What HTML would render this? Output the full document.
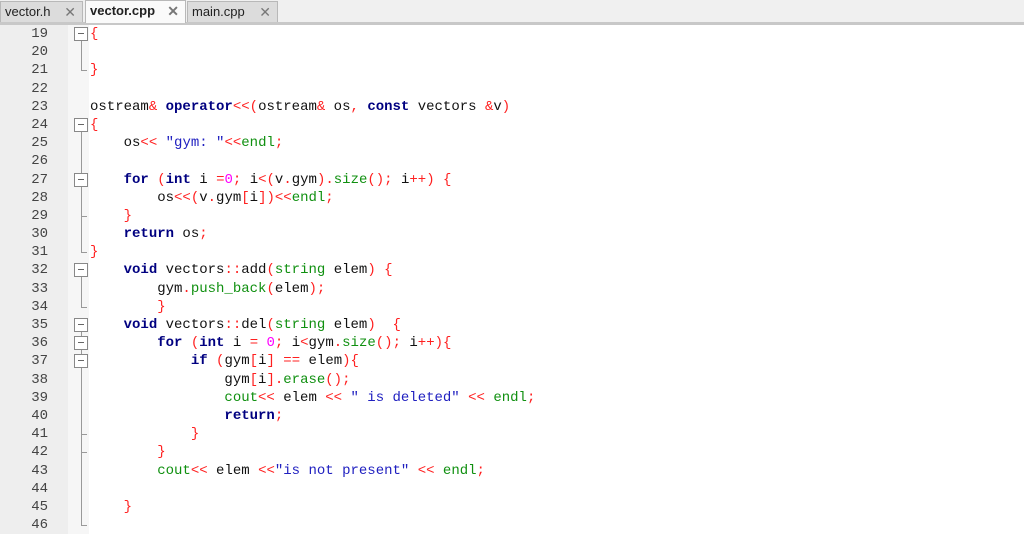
<!DOCTYPE html>
<html><head><meta charset="utf-8"><style>
body{margin:0;width:1024px;height:534px;overflow:hidden;background:#fff;position:relative;font-family:"Liberation Sans",sans-serif}
#tabs{position:absolute;left:0;top:0;width:1024px;height:22px;background:#f0f0f0;border-bottom:3px solid #c8c8c8}
.tab{position:absolute;top:1px;height:21px;background:#dcdcdc;border:1px solid #b8b8b8;border-bottom:none;font-size:13px;line-height:20px;padding-left:4px;box-sizing:border-box;color:#222}
.tab .x{position:absolute;right:6px;top:0;color:#777;font-size:14px}
.tab.act{background:#fafafa;font-weight:bold;top:0;height:23px}
#gut{position:absolute;left:0;top:25px;width:68px;height:509px;background:#eeeeee}
#fold{position:absolute;left:68px;top:25px;width:21px;height:509px;background:#f6f6f6}
#code{position:absolute;left:0;top:25px;width:1024px}
.l{height:18.2px;line-height:18.2px;position:relative;white-space:pre;font-family:"Liberation Mono",monospace;font-size:14px;color:#111}
.n{position:absolute;left:0;width:48px;text-align:right;color:#444}
.c{position:absolute;left:90px}
.k{color:#000080;font-weight:bold}.o{color:#ff2020}.g{color:#109010}.s{color:#2020c0}.m{color:#ff00ff}
.bx{position:absolute;left:74px;top:2px;width:14px;height:14px;border:1px solid #888;background:#fff;box-sizing:border-box;z-index:2}
.bx:after{content:"";position:absolute;left:3px;top:5px;width:6px;height:1px;background:#666}
.vl{position:absolute;left:81px;top:0;width:1px;height:18.2px;background:#999}
.vlb{position:absolute;left:81px;top:14px;width:1px;height:4.2px;background:#999}
.vlt{position:absolute;left:81px;top:0;width:1px;height:10px;background:#999}
.hz{position:absolute;left:81px;top:9px;width:6px;height:1px;background:#999}
</style></head><body>
<div id="tabs">
<div class="tab" style="left:0;width:83px">vector.h<span class="x">✕</span></div>
<div class="tab act" style="left:85px;width:101px">vector.cpp<span class="x">✕</span></div>
<div class="tab" style="left:187px;width:91px">main.cpp<span class="x">✕</span></div>
</div>
<div id="gut"></div><div id="fold"></div>
<div id="code">
<div class="l"><span class="n">19</span><span class="bx"></span><span class="vlb"></span><span class="c"><span class="o">{</span></span></div>
<div class="l"><span class="n">20</span><span class="vl"></span></div>
<div class="l"><span class="n">21</span><span class="vlt"></span><span class="hz"></span><span class="c"><span class="o">}</span></span></div>
<div class="l"><span class="n">22</span></div>
<div class="l"><span class="n">23</span><span class="c">ostream<span class="o">&amp;</span> <span class="k">operator</span><span class="o">&lt;&lt;(</span>ostream<span class="o">&amp;</span> os<span class="o">,</span> <span class="k">const</span> vectors <span class="o">&amp;</span>v<span class="o">)</span></span></div>
<div class="l"><span class="n">24</span><span class="bx"></span><span class="vlb"></span><span class="c"><span class="o">{</span></span></div>
<div class="l"><span class="n">25</span><span class="vl"></span><span class="c">    os<span class="o">&lt;&lt;</span> <span class="s">"gym: "</span><span class="o">&lt;&lt;</span><span class="g">endl</span><span class="o">;</span></span></div>
<div class="l"><span class="n">26</span><span class="vl"></span></div>
<div class="l"><span class="n">27</span><span class="vl"></span><span class="bx"></span><span class="c">    <span class="k">for</span> <span class="o">(</span><span class="k">int</span> i <span class="o">=</span><span class="m">0</span><span class="o">;</span> i<span class="o">&lt;(</span>v<span class="o">.</span>gym<span class="o">).</span><span class="g">size</span><span class="o">();</span> i<span class="o">++)</span> <span class="o">{</span></span></div>
<div class="l"><span class="n">28</span><span class="vl"></span><span class="c">        os<span class="o">&lt;&lt;(</span>v<span class="o">.</span>gym<span class="o">[</span>i<span class="o">])&lt;&lt;</span><span class="g">endl</span><span class="o">;</span></span></div>
<div class="l"><span class="n">29</span><span class="vl"></span><span class="hz"></span><span class="c">    <span class="o">}</span></span></div>
<div class="l"><span class="n">30</span><span class="vl"></span><span class="c">    <span class="k">return</span> os<span class="o">;</span></span></div>
<div class="l"><span class="n">31</span><span class="vlt"></span><span class="hz"></span><span class="c"><span class="o">}</span></span></div>
<div class="l"><span class="n">32</span><span class="bx"></span><span class="vlb"></span><span class="c">    <span class="k">void</span> vectors<span class="o">::</span>add<span class="o">(</span><span class="g">string</span> elem<span class="o">)</span> <span class="o">{</span></span></div>
<div class="l"><span class="n">33</span><span class="vl"></span><span class="c">        gym<span class="o">.</span><span class="g">push_back</span><span class="o">(</span>elem<span class="o">);</span></span></div>
<div class="l"><span class="n">34</span><span class="vlt"></span><span class="hz"></span><span class="c">        <span class="o">}</span></span></div>
<div class="l"><span class="n">35</span><span class="bx"></span><span class="vlb"></span><span class="c">    <span class="k">void</span> vectors<span class="o">::</span>del<span class="o">(</span><span class="g">string</span> elem<span class="o">)</span>  <span class="o">{</span></span></div>
<div class="l"><span class="n">36</span><span class="vl"></span><span class="bx"></span><span class="c">        <span class="k">for</span> <span class="o">(</span><span class="k">int</span> i <span class="o">=</span> <span class="m">0</span><span class="o">;</span> i<span class="o">&lt;</span>gym<span class="o">.</span><span class="g">size</span><span class="o">();</span> i<span class="o">++){</span></span></div>
<div class="l"><span class="n">37</span><span class="vl"></span><span class="bx"></span><span class="c">            <span class="k">if</span> <span class="o">(</span>gym<span class="o">[</span>i<span class="o">]</span> <span class="o">==</span> elem<span class="o">){</span></span></div>
<div class="l"><span class="n">38</span><span class="vl"></span><span class="c">                gym<span class="o">[</span>i<span class="o">].</span><span class="g">erase</span><span class="o">();</span></span></div>
<div class="l"><span class="n">39</span><span class="vl"></span><span class="c">                <span class="g">cout</span><span class="o">&lt;&lt;</span> elem <span class="o">&lt;&lt;</span> <span class="s">" is deleted"</span> <span class="o">&lt;&lt;</span> <span class="g">endl</span><span class="o">;</span></span></div>
<div class="l"><span class="n">40</span><span class="vl"></span><span class="c">                <span class="k">return</span><span class="o">;</span></span></div>
<div class="l"><span class="n">41</span><span class="vl"></span><span class="hz"></span><span class="c">            <span class="o">}</span></span></div>
<div class="l"><span class="n">42</span><span class="vl"></span><span class="hz"></span><span class="c">        <span class="o">}</span></span></div>
<div class="l"><span class="n">43</span><span class="vl"></span><span class="c">        <span class="g">cout</span><span class="o">&lt;&lt;</span> elem <span class="o">&lt;&lt;</span><span class="s">"is not present"</span> <span class="o">&lt;&lt;</span> <span class="g">endl</span><span class="o">;</span></span></div>
<div class="l"><span class="n">44</span><span class="vl"></span></div>
<div class="l"><span class="n">45</span><span class="vl"></span><span class="c">    <span class="o">}</span></span></div>
<div class="l"><span class="n">46</span><span class="vlt"></span><span class="hz"></span></div>
</div>
</body></html>
